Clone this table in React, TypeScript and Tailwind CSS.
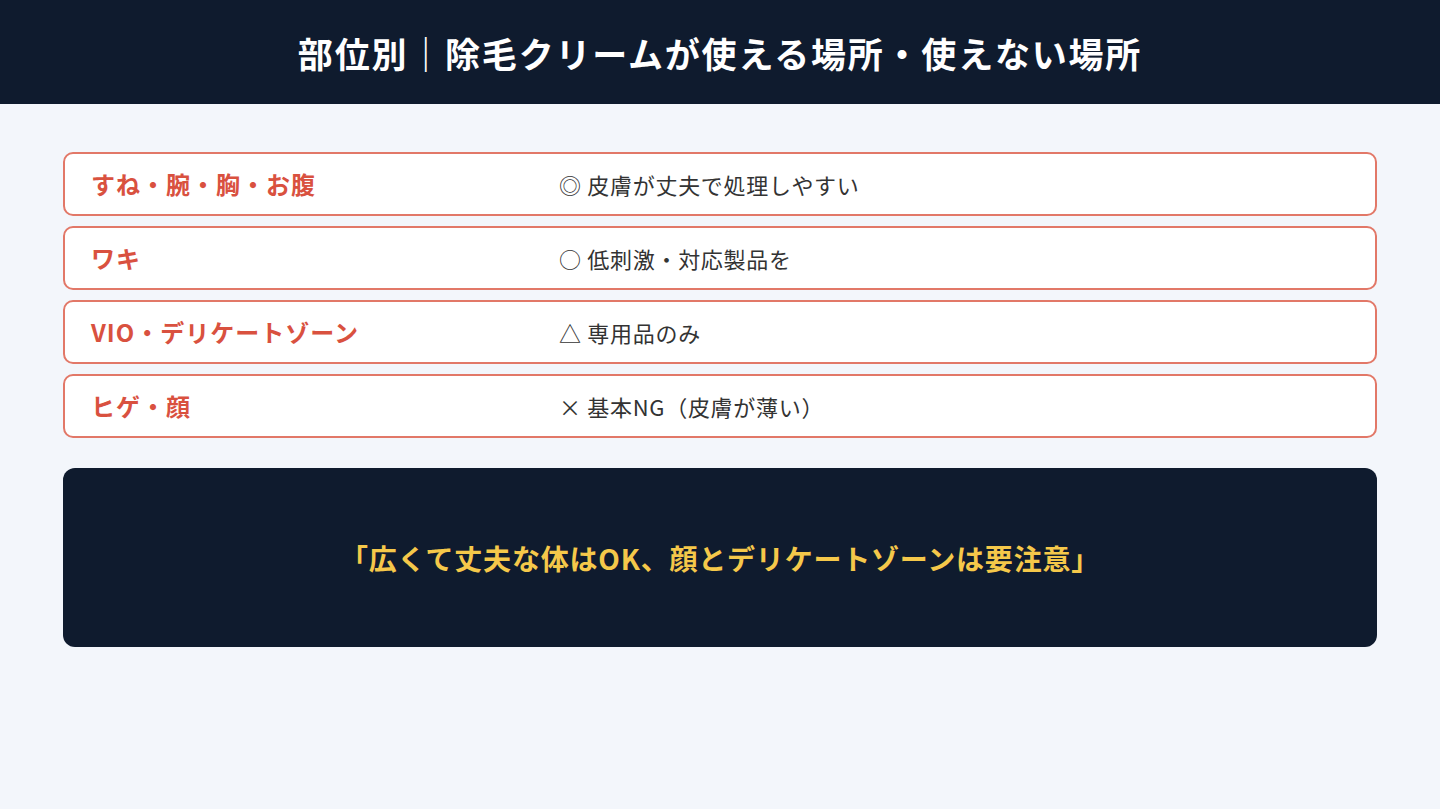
import React from "react";

const rows = [
  { label: "すね・腕・胸・お腹", value: "◎ 皮膚が丈夫で処理しやすい" },
  { label: "ワキ", value: "○ 低刺激・対応製品を" },
  { label: "VIO・デリケートゾーン", value: "△ 専用品のみ" },
  { label: "ヒゲ・顔", value: "× 基本NG（皮膚が薄い）" },
];

export default function App() {
  return (
    <div
      className="w-[1440px] h-[809px] bg-[#f3f6fb] flex flex-col"
      style={{ fontFamily: '"Noto Sans CJK JP", "Noto Sans", sans-serif' }}
    >
      <header className="h-[104px] bg-[#0f1b2e] flex items-center justify-center shrink-0">
        <h1 className="text-white font-bold text-[35px] leading-none tracking-[1.8px]">
          部位別｜除毛クリームが使える場所・使えない場所
        </h1>
      </header>
      <main className="px-[63px] pt-[48px] flex flex-col">
        <div className="flex flex-col gap-[10px]">
          {rows.map((r) => (
            <div
              key={r.label}
              className="h-[64px] bg-white border-2 border-[#e27868] rounded-[10px] flex items-center px-[26px]"
            >
              <div className="w-[468px] shrink-0 text-[#d9513f] font-bold text-[24px] leading-none tracking-[1px]">
                {r.label}
              </div>
              <div className="text-[#333333] text-[22px] leading-none tracking-[0.7px]">{r.value}</div>
            </div>
          ))}
        </div>
        <div className="mt-[30px] h-[179px] bg-[#0f1b2e] rounded-[12px] flex items-center justify-center">
          <p className="text-[#f5c84a] font-bold text-[28px] leading-none tracking-[0.8px]">
            「広くて丈夫な体はOK、顔とデリケートゾーンは要注意」
          </p>
        </div>
      </main>
    </div>
  );
}
